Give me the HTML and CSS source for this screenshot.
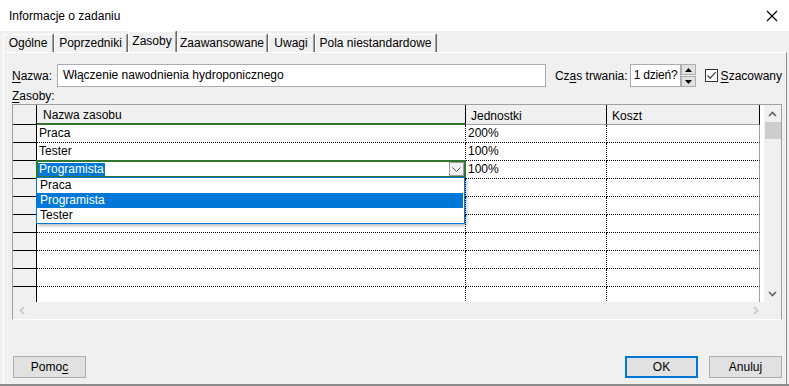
FILE: index.html
```html
<!DOCTYPE html>
<html lang="pl">
  <head>
    <meta charset="UTF-8" />
    <title>Informacje o zadaniu</title>
    <link rel="stylesheet" href="styles.css">
  </head>
  <body>
    <div class="dialog">
      <header class="titlebar">
        <span class="title">Informacje o zadaniu</span>
        <svg class="close" width="12" height="12" viewBox="0 0 12 12">
          <path d="M1 1 L11 11 M11 1 L1 11" stroke="#000" stroke-width="1.2" fill="none" />
        </svg>
      </header>

      <nav class="tabs">
        <div class="tab t-general">Ogólne</div>
        <div class="tab t-pred">Poprzedniki</div>
        <div class="tab t-res active">Zasoby</div>
        <div class="tab t-adv">Zaawansowane</div>
        <div class="tab t-notes">Uwagi</div>
        <div class="tab t-custom">Pola niestandardowe</div>
      </nav>

      <section class="panel">
        <div class="name-row">
          <span class="lbl name-lbl"><u>N</u>azwa:</span>
          <div class="field name-field">Włączenie nawodnienia hydroponicznego</div>
          <span class="lbl dur-lbl">Cz<u>a</u>s trwania:</span>
          <div class="field dur-field">1 dzień?</div>
          <div class="spin">
            <span class="spin-btn">
              <svg width="7" height="4" viewBox="0 0 7 4"><path d="M0 4 L3.5 0 L7 4 Z" fill="#000" /></svg>
            </span>
            <span class="spin-btn">
              <svg width="7" height="4" viewBox="0 0 7 4"><path d="M0 0 L3.5 4 L7 0 Z" fill="#000" /></svg>
            </span>
          </div>
          <span class="check">
            <svg width="11" height="11" viewBox="0 0 11 11"><path d="M1.5 5.5 L4.2 8.2 L9.8 2.2" stroke="#333" stroke-width="1.1" fill="none" /></svg>
          </span>
          <span class="lbl"><u>S</u>zacowany</span>
        </div>

        <div class="lbl res-lbl"><u>Z</u>asoby:</div>

        <div class="grid">
          <div class="grid-main">
            <div class="grid-view">
              <table class="sheet">
                <thead>
                  <tr>
                    <th class="rh"></th>
                    <th class="col-name">Nazwa zasobu</th>
                    <th class="col-units">Jednostki</th>
                    <th class="col-cost">Koszt</th>
                  </tr>
                </thead>
                <tbody>
                  <tr><th class="rh"></th><td>Praca</td><td>200%</td><td class="last"></td></tr>
                  <tr><th class="rh"></th><td>Tester</td><td>100%</td><td class="last"></td></tr>
                  <tr>
                    <th class="rh"></th>
                    <td class="editing">
                      <div class="edit-box">
                        <span class="sel">Programista</span>
                        <span class="dd-btn">
                          <svg width="9" height="5" viewBox="0 0 9 5"><path d="M0.5 0.5 L4.5 4.5 L8.5 0.5" stroke="#555" stroke-width="1" fill="none" /></svg>
                        </span>
                      </div>
                    </td>
                    <td>100%</td>
                    <td class="last"></td>
                  </tr>
                  <tr><th class="rh"></th><td></td><td></td><td class="last"></td></tr>
                  <tr><th class="rh"></th><td></td><td></td><td class="last"></td></tr>
                  <tr><th class="rh"></th><td></td><td></td><td class="last"></td></tr>
                  <tr><th class="rh"></th><td></td><td></td><td class="last"></td></tr>
                  <tr><th class="rh"></th><td></td><td></td><td class="last"></td></tr>
                  <tr><th class="rh"></th><td></td><td></td><td class="last"></td></tr>
                  <tr><th class="rh"></th><td></td><td></td><td class="last"></td></tr>
                </tbody>
              </table>
            </div>
            <div class="gap"></div>
            <div class="vscroll">
              <span class="sb-btn">
                <svg width="9" height="6" viewBox="0 0 9 6"><path d="M1 5 L4.5 1.5 L8 5" stroke="#606060" stroke-width="1.6" fill="none" /></svg>
              </span>
              <span class="thumb"></span>
              <span class="sb-fill"></span>
              <span class="sb-btn">
                <svg width="9" height="6" viewBox="0 0 9 6"><path d="M1 1 L4.5 4.5 L8 1" stroke="#606060" stroke-width="1.6" fill="none" /></svg>
              </span>
            </div>
          </div>
          <div class="hscroll">
            <span class="sb-btn">
              <svg width="6" height="9" viewBox="0 0 6 9"><path d="M5 1 L1.5 4.5 L5 8" stroke="#c4c4c4" stroke-width="1.6" fill="none" /></svg>
            </span>
            <span class="sb-fill"></span>
            <span class="sb-btn">
              <svg width="6" height="9" viewBox="0 0 6 9"><path d="M1 1 L4.5 4.5 L1 8" stroke="#c4c4c4" stroke-width="1.6" fill="none" /></svg>
            </span>
            <span class="corner"></span>
          </div>

          <ul class="dropdown">
            <li>Praca</li>
            <li class="picked">Programista</li>
            <li>Tester</li>
          </ul>
        </div>

        <footer class="buttons">
          <button class="btn">Pomo<u>c</u></button>
          <span class="spacer"></span>
          <button class="btn default">OK</button>
          <button class="btn">Anuluj</button>
        </footer>
      </section>
    </div>
  </body>
</html>
```

FILE: styles.css
```css
* {
  box-sizing: border-box;
}

html {
  font-family: "Liberation Sans", Arial, sans-serif;
  font-size: 12px;
}

body {
  margin: 0;
  width: 789px;
  height: 386px;
  overflow: hidden;
  background-color: #f0f0f0;
  color: #000;
}

.dialog {
  height: 386px;
  border-bottom: 2px solid #8c8c8c;
}

/* title bar */
.titlebar {
  height: 31px;
  background-color: #fff;
  display: flex;
  align-items: center;
  justify-content: space-between;
  padding: 0 11px 0 9px;
}

.close {
  display: block;
}

/* tabs */
.tabs {
  display: flex;
  align-items: flex-end;
  height: 21px;
  padding-left: 3px;
}

.tab {
  height: 18px;
  line-height: 17px;
  text-align: center;
  white-space: nowrap;
  border-top: 1px solid #fff;
  border-left: 1px solid #fff;
  border-right: 1px solid #a0a0a0;
  box-shadow: 1px 0 0 #696969;
  margin-right: 1px;
}

.tab.active {
  height: 21px;
  line-height: 18px;
}

.t-general { width: 50px; }
.t-pred { width: 73px; }
.t-res { width: 48px; }
.t-adv { width: 90px; }
.t-notes { width: 46px; }
.t-custom { width: 121px; }

/* tab page */
.panel {
  margin-left: 3px;
  width: 784px;
  height: 332px;
  border-top: 1px solid #fff;
  border-left: 1px solid #fff;
  border-right: 1px solid #8c8c8c;
  padding: 0 4px 0 8px;
  display: flex;
  flex-direction: column;
}

.lbl u,
.btn u {
  text-decoration-thickness: 1px;
  text-underline-offset: 2px;
}

.name-row {
  display: flex;
  align-items: center;
  height: 23px;
  margin-top: 11px;
}

.name-lbl {
  width: 45px;
}

.field {
  height: 23px;
  line-height: 21px;
  border: 1px solid #abadb3;
  background-color: #fff;
  padding-left: 5px;
  white-space: nowrap;
  overflow: hidden;
}

.name-field {
  width: 490px;
}

.dur-lbl {
  width: 75px;
  margin-left: 9px;
}

.dur-field {
  width: 51px;
  padding-left: 3px;
  letter-spacing: -0.2px;
}

.spin {
  width: 15px;
  height: 23px;
  display: flex;
  flex-direction: column;
  gap: 1px;
}

.spin-btn {
  flex: 1;
  display: flex;
  align-items: center;
  justify-content: center;
  background-color: #e1e1e1;
  border: 1px solid #adadad;
}

.check {
  width: 13px;
  height: 13px;
  margin-left: 9px;
  margin-right: 3px;
  border: 1px solid #333;
  background-color: #fff;
  display: flex;
  align-items: center;
  justify-content: center;
}

.res-lbl {
  line-height: 16px;
  margin-top: 1px;
}

/* resource sheet */
.grid {
  position: relative;
  width: 770px;
  border: 1px solid #a0a0a0;
  border-bottom-color: #fff;
}

.grid-main {
  display: flex;
  height: 197px;
}

.grid-view {
  width: 747px;
  height: 197px;
  overflow: hidden;
  background-color: #fff;
}

.gap {
  width: 4px;
  background-color: #fff;
}

.sheet {
  border-collapse: separate;
  border-spacing: 0;
  table-layout: fixed;
  width: 747px;
}

.sheet th,
.sheet td {
  padding: 0 0 0 2px;
  height: 18px;
  line-height: 17px;
  font-weight: normal;
  text-align: left;
  white-space: nowrap;
  border-right: 1px dotted #000;
  border-bottom: 1px dotted #000;
}

.sheet .rh {
  width: 24px;
  background-color: #f0f0f0;
  border-right: 1px solid #000;
  border-bottom: 1px solid #000;
}

.sheet thead th {
  height: 19px;
  background-color: #f0f0f0;
  padding: 2px 0 0 5px;
  line-height: 16px;
  border-right: 1px solid #000;
  border-bottom: 1px solid #a0a0a0;
}

.sheet thead .rh {
  border-bottom: 1px solid #000;
}

.sheet thead .col-name {
  width: 429px;
  border-bottom: 2px solid #31752f;
  padding-left: 6px;
}

.sheet thead .col-units {
  width: 141px;
}

.sheet td.last {
  border-right: 1px solid #a0a0a0;
}

.sheet td.editing {
  position: relative;
}

.edit-box {
  position: absolute;
  top: -1px;
  left: -1px;
  right: -1px;
  bottom: 0;
  border: 2px solid #31752f;
  display: flex;
  align-items: flex-start;
  justify-content: space-between;
}

.sel {
  margin-top: 1px;
  padding: 0 1px;
  line-height: 13px;
  background-color: #0078d7;
  color: #fff;
}

.dd-btn {
  width: 15px;
  height: 14px;
  display: flex;
  align-items: center;
  justify-content: center;
  background-color: #f0f0f0;
  border: 1px solid #a0a0a0;
}

/* scroll bars */
.vscroll {
  width: 17px;
  display: flex;
  flex-direction: column;
  background-color: #f0f0f0;
}

.sb-btn {
  width: 17px;
  height: 17px;
  display: flex;
  align-items: center;
  justify-content: center;
}

.thumb {
  height: 17px;
  margin: 0 0 0 1px;
  background-color: #cdcdcd;
}

.sb-fill {
  flex: 1;
}

.hscroll {
  display: flex;
  height: 17px;
  background-color: #f0f0f0;
}

.corner {
  width: 17px;
}

/* open combo list */
.dropdown {
  position: absolute;
  left: 23px;
  top: 72px;
  width: 429px;
  margin: 0;
  padding: 0;
  list-style: none;
  background-color: #fff;
  border: 1px solid #0078d7;
  box-shadow: 2px 2px 3px rgba(0, 0, 0, 0.25);
}

.dropdown li {
  height: 15px;
  line-height: 15px;
  padding-left: 3px;
}

.dropdown li.picked {
  margin-right: 1px;
  background-color: #0078d7;
  color: #fff;
}

/* dialog buttons */
.buttons {
  display: flex;
  margin-top: 36px;
  padding-left: 1px;
}

.spacer {
  flex: 1;
}

.btn {
  width: 73px;
  height: 22px;
  margin-left: 11px;
  padding: 0;
  font-family: inherit;
  font-size: 12px;
  color: #000;
  background-color: #e1e1e1;
  border: 1px solid #adadad;
}

.btn:first-child {
  margin-left: 0;
}

.btn.default {
  border: 2px solid #0078d7;
}
```
